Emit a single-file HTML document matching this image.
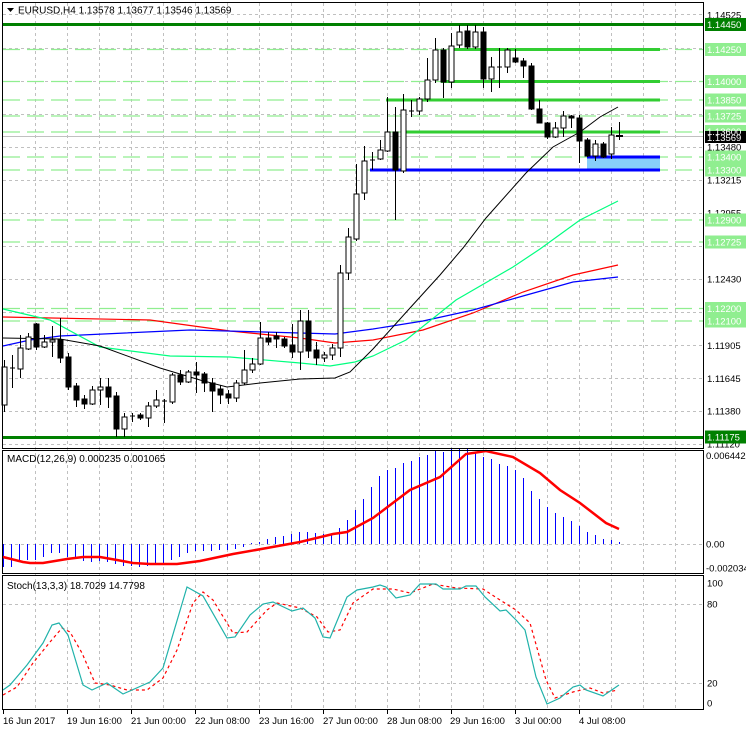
<!DOCTYPE html>
<html><head><meta charset="utf-8"><style>
html,body{margin:0;padding:0;background:#fff;width:746px;height:731px;overflow:hidden}
svg{display:block;font-family:"Liberation Sans",Tahoma,sans-serif}
</style></head><body>
<svg width="746" height="731" viewBox="0 0 746 731" xmlns="http://www.w3.org/2000/svg">
<rect width="746" height="731" fill="#fff"/>
<!-- vertical grid -->
<g stroke="#c0c0c0" stroke-dasharray="3,3" stroke-width="1">
<line x1="35.5" y1="3" x2="35.5" y2="710"/><line x1="67.5" y1="3" x2="67.5" y2="710"/><line x1="99.5" y1="3" x2="99.5" y2="710"/><line x1="131.5" y1="3" x2="131.5" y2="710"/><line x1="163.5" y1="3" x2="163.5" y2="710"/><line x1="195.5" y1="3" x2="195.5" y2="710"/><line x1="227.5" y1="3" x2="227.5" y2="710"/><line x1="259.5" y1="3" x2="259.5" y2="710"/><line x1="291.5" y1="3" x2="291.5" y2="710"/><line x1="323.5" y1="3" x2="323.5" y2="710"/><line x1="355.5" y1="3" x2="355.5" y2="710"/><line x1="387.5" y1="3" x2="387.5" y2="710"/><line x1="419.5" y1="3" x2="419.5" y2="710"/><line x1="451.5" y1="3" x2="451.5" y2="710"/><line x1="483.5" y1="3" x2="483.5" y2="710"/><line x1="515.5" y1="3" x2="515.5" y2="710"/><line x1="547.5" y1="3" x2="547.5" y2="710"/><line x1="579.5" y1="3" x2="579.5" y2="710"/><line x1="611.5" y1="3" x2="611.5" y2="710"/><line x1="643.5" y1="3" x2="643.5" y2="710"/><line x1="675.5" y1="3" x2="675.5" y2="710"/>
<!-- horizontal grid main -->
<line x1="3" y1="14.5" x2="703" y2="14.5"/><line x1="3" y1="48.5" x2="703" y2="48.5"/><line x1="3" y1="81.5" x2="703" y2="81.5"/><line x1="3" y1="114.5" x2="703" y2="114.5"/><line x1="3" y1="147.5" x2="703" y2="147.5"/><line x1="3" y1="180.5" x2="703" y2="180.5"/><line x1="3" y1="213.5" x2="703" y2="213.5"/><line x1="3" y1="246.5" x2="703" y2="246.5"/><line x1="3" y1="279.5" x2="703" y2="279.5"/><line x1="3" y1="312.5" x2="703" y2="312.5"/><line x1="3" y1="345.5" x2="703" y2="345.5"/><line x1="3" y1="378.5" x2="703" y2="378.5"/><line x1="3" y1="411.5" x2="703" y2="411.5"/><line x1="3" y1="444.5" x2="703" y2="444.5"/>
<line x1="3" y1="544.5" x2="703" y2="544.5"/>
<line x1="3" y1="604.5" x2="703" y2="604.5"/><line x1="3" y1="683.5" x2="703" y2="683.5"/>
</g>
<!-- light green dashed levels -->
<g stroke="#90ee90" stroke-width="1.2" stroke-dasharray="17,7">
<line x1="3" y1="49.5" x2="703" y2="49.5"/><line x1="3" y1="81.5" x2="703" y2="81.5"/><line x1="3" y1="100" x2="703" y2="100"/><line x1="3" y1="116" x2="703" y2="116"/><line x1="3" y1="132" x2="703" y2="132"/><line x1="3" y1="157" x2="703" y2="157"/><line x1="3" y1="170" x2="703" y2="170"/><line x1="3" y1="220" x2="703" y2="220"/><line x1="3" y1="242" x2="703" y2="242"/><line x1="3" y1="308.5" x2="703" y2="308.5"/><line x1="3" y1="321" x2="703" y2="321"/>
</g>
<!-- current price line -->
<line x1="3" y1="136.5" x2="703" y2="136.5" stroke="#c0c0c0" stroke-width="1"/>
<!-- thick dark green -->
<rect x="3" y="23" width="700" height="3" fill="#008000"/>
<rect x="3" y="436" width="700" height="3" fill="#008000"/>
<!-- lime segments -->
<rect x="450" y="48" width="210" height="3" fill="#32cd32"/>
<rect x="441" y="80" width="219" height="3" fill="#32cd32"/>
<rect x="386" y="98.5" width="274" height="3" fill="#32cd32"/>
<rect x="405" y="130.5" width="255" height="3" fill="#32cd32"/>
<!-- blue zone -->
<rect x="587" y="157" width="73" height="13" fill="#87cefa"/>
<rect x="587" y="155.5" width="73" height="3" fill="#0000ff"/>
<rect x="370" y="168.5" width="290" height="3" fill="#0000ff"/>
<!-- MAs -->
<g fill="none" stroke-width="1.2">
<polyline stroke="#ff0000" points="3,317 150,320 230,331 300,338 335,343 373,340 423,330 473,313 523,292 573,275 618,265"/>
<polyline stroke="#0000ff" points="3,346 30,340 60,336 190,330 300,333 335,334 373,329 423,321 473,310 523,296 573,282 618,277"/>
<polyline stroke="#00ff7f" points="3,309 50,320 100,347 170,356 230,357 300,363 330,366 355,362 373,356 406,340 456,300 513,267 540,249 580,220 618,201"/>
<polyline stroke="#000" stroke-width="1" points="3,338 60,339 100,346 160,368 200,380 227,387 260,383 300,379 335,378 350,372 373,349 410,308 440,275 463,248 486,218 526,173 553,147 580,132 600,117 618,107"/>
</g>
<!-- candles -->
<g stroke="#000" stroke-width="1">
<line x1="4.5" y1="360" x2="4.5" y2="412"/><rect x="2" y="367" width="5" height="38" fill="#fff"/>
<line x1="12.5" y1="355" x2="12.5" y2="388"/><line x1="10" y1="368" x2="15" y2="368"/>
<line x1="20.5" y1="335" x2="20.5" y2="378"/><rect x="18" y="348" width="5" height="21" fill="#fff"/>
<line x1="28.5" y1="333" x2="28.5" y2="350"/><rect x="26" y="337" width="5" height="12" fill="#fff"/>
<line x1="36.5" y1="323" x2="36.5" y2="350"/><rect x="34" y="324" width="5" height="23" fill="#000"/>
<line x1="44.5" y1="335" x2="44.5" y2="348"/><rect x="42" y="342" width="5" height="5" fill="#fff"/>
<line x1="52.5" y1="326" x2="52.5" y2="357"/><rect x="50" y="340" width="5" height="2" fill="#fff"/>
<line x1="60.5" y1="318" x2="60.5" y2="363"/><rect x="58" y="340" width="5" height="18" fill="#000"/>
<line x1="68.5" y1="353" x2="68.5" y2="390"/><rect x="66" y="357" width="5" height="30" fill="#000"/>
<line x1="76.5" y1="383" x2="76.5" y2="407"/><rect x="74" y="386" width="5" height="14" fill="#000"/>
<line x1="84.5" y1="395" x2="84.5" y2="409"/><rect x="82" y="399" width="5" height="5" fill="#000"/>
<line x1="92.5" y1="386" x2="92.5" y2="405"/><rect x="90" y="390" width="5" height="14" fill="#fff"/>
<line x1="100.5" y1="378" x2="100.5" y2="405"/><rect x="98" y="387" width="5" height="3" fill="#fff"/>
<line x1="108.5" y1="378" x2="108.5" y2="408"/><rect x="106" y="387" width="5" height="10" fill="#000"/>
<line x1="116.5" y1="392" x2="116.5" y2="437"/><rect x="114" y="396" width="5" height="33" fill="#000"/>
<line x1="124.5" y1="413" x2="124.5" y2="437"/><rect x="122" y="417" width="5" height="12" fill="#fff"/>
<line x1="132.5" y1="413" x2="132.5" y2="422"/><line x1="130" y1="416" x2="135" y2="416"/>
<line x1="140.5" y1="413" x2="140.5" y2="420"/><rect x="138" y="415" width="5" height="3" fill="#000"/>
<line x1="148.5" y1="402" x2="148.5" y2="427"/><rect x="146" y="406" width="5" height="12" fill="#fff"/>
<line x1="156.5" y1="390" x2="156.5" y2="408"/><rect x="154" y="400" width="5" height="6" fill="#fff"/>
<line x1="164.5" y1="399" x2="164.5" y2="423"/><line x1="162" y1="401" x2="167" y2="401"/>
<line x1="172.5" y1="373" x2="172.5" y2="404"/><rect x="170" y="375" width="5" height="27" fill="#fff"/>
<line x1="180.5" y1="370" x2="180.5" y2="385"/><rect x="178" y="375" width="5" height="7" fill="#000"/>
<line x1="188.5" y1="370" x2="188.5" y2="383"/><rect x="186" y="372" width="5" height="10" fill="#fff"/>
<line x1="196.5" y1="362" x2="196.5" y2="393"/><rect x="194" y="372" width="5" height="3" fill="#000"/>
<line x1="204.5" y1="372" x2="204.5" y2="392"/><rect x="202" y="374" width="5" height="9" fill="#000"/>
<line x1="212.5" y1="378" x2="212.5" y2="412"/><rect x="210" y="383" width="5" height="8" fill="#000"/>
<line x1="220.5" y1="385" x2="220.5" y2="404"/><rect x="218" y="389" width="5" height="6" fill="#000"/>
<line x1="228.5" y1="390" x2="228.5" y2="404"/><rect x="226" y="394" width="5" height="4" fill="#000"/>
<line x1="236.5" y1="380" x2="236.5" y2="402"/><rect x="234" y="383" width="5" height="15" fill="#fff"/>
<line x1="244.5" y1="350" x2="244.5" y2="385"/><rect x="242" y="370" width="5" height="13" fill="#fff"/>
<line x1="252.5" y1="358" x2="252.5" y2="373"/><rect x="250" y="364" width="5" height="6" fill="#fff"/>
<line x1="260.5" y1="322" x2="260.5" y2="365"/><rect x="258" y="338" width="5" height="26" fill="#fff"/>
<line x1="268.5" y1="332" x2="268.5" y2="345"/><rect x="266" y="338" width="5" height="4" fill="#000"/>
<line x1="276.5" y1="332" x2="276.5" y2="348"/><rect x="274" y="336" width="5" height="3" fill="#000"/>
<line x1="284.5" y1="337" x2="284.5" y2="348"/><rect x="282" y="339" width="5" height="7" fill="#000"/>
<line x1="292.5" y1="324" x2="292.5" y2="358"/><rect x="290" y="345" width="5" height="7" fill="#000"/>
<line x1="300.5" y1="310" x2="300.5" y2="370"/><rect x="298" y="321" width="5" height="31" fill="#fff"/>
<line x1="308.5" y1="310" x2="308.5" y2="358"/><rect x="306" y="321" width="5" height="30" fill="#000"/>
<line x1="316.5" y1="342" x2="316.5" y2="365"/><rect x="314" y="350" width="5" height="8" fill="#000"/>
<line x1="324.5" y1="352" x2="324.5" y2="362"/><rect x="322" y="355" width="5" height="3" fill="#fff"/>
<line x1="332.5" y1="344" x2="332.5" y2="360"/><rect x="330" y="348" width="5" height="7" fill="#fff"/>
<line x1="340.5" y1="265" x2="340.5" y2="357"/><rect x="338" y="273" width="5" height="75" fill="#fff"/>
<line x1="348.5" y1="228" x2="348.5" y2="280"/><rect x="346" y="237" width="5" height="36" fill="#fff"/>
<line x1="356.5" y1="164" x2="356.5" y2="241"/><rect x="354" y="194" width="5" height="45" fill="#fff"/>
<line x1="364.5" y1="146" x2="364.5" y2="200"/><rect x="362" y="161" width="5" height="32" fill="#fff"/>
<line x1="372.5" y1="152" x2="372.5" y2="170"/><line x1="370" y1="160" x2="375" y2="160"/>
<line x1="380.5" y1="140" x2="380.5" y2="160"/><rect x="378" y="150" width="5" height="9" fill="#fff"/>
<line x1="387.5" y1="97" x2="387.5" y2="152"/><rect x="385" y="132" width="5" height="19" fill="#fff"/>
<line x1="395.5" y1="107" x2="395.5" y2="220"/><rect x="393" y="132" width="5" height="38" fill="#000"/>
<line x1="403.5" y1="94" x2="403.5" y2="173"/><rect x="401" y="110" width="5" height="61" fill="#fff"/>
<line x1="411.5" y1="100" x2="411.5" y2="117"/><line x1="409" y1="111" x2="414" y2="111"/>
<line x1="419.5" y1="97" x2="419.5" y2="115"/><rect x="417" y="99" width="5" height="12" fill="#fff"/>
<line x1="427.5" y1="58" x2="427.5" y2="102"/><rect x="425" y="80" width="5" height="19" fill="#fff"/>
<line x1="435.5" y1="38" x2="435.5" y2="83"/><rect x="433" y="50" width="5" height="30" fill="#fff"/>
<line x1="443.5" y1="48" x2="443.5" y2="98"/><rect x="441" y="50" width="5" height="32" fill="#000"/>
<line x1="451.5" y1="33" x2="451.5" y2="88"/><rect x="449" y="46" width="5" height="36" fill="#fff"/>
<line x1="459.5" y1="25" x2="459.5" y2="48"/><rect x="457" y="32" width="5" height="13" fill="#fff"/>
<line x1="467.5" y1="25" x2="467.5" y2="49"/><rect x="465" y="31" width="5" height="16" fill="#000"/>
<line x1="475.5" y1="25" x2="475.5" y2="49"/><rect x="473" y="32" width="5" height="15" fill="#fff"/>
<line x1="483.5" y1="27" x2="483.5" y2="88"/><rect x="481" y="32" width="5" height="47" fill="#000"/>
<line x1="491.5" y1="57" x2="491.5" y2="92"/><rect x="489" y="67" width="5" height="12" fill="#fff"/>
<line x1="499.5" y1="48" x2="499.5" y2="88"/><line x1="497" y1="67" x2="502" y2="67"/>
<line x1="507.5" y1="48" x2="507.5" y2="73"/><rect x="505" y="50" width="5" height="17" fill="#fff"/>
<line x1="515.5" y1="49" x2="515.5" y2="63"/><rect x="513" y="58" width="5" height="4" fill="#000"/>
<line x1="523.5" y1="58" x2="523.5" y2="78"/><rect x="521" y="61" width="5" height="5" fill="#000"/>
<line x1="531.5" y1="63" x2="531.5" y2="110"/><rect x="529" y="66" width="5" height="43" fill="#000"/>
<line x1="539.5" y1="100" x2="539.5" y2="123"/><rect x="537" y="109" width="5" height="14" fill="#000"/>
<line x1="547.5" y1="122" x2="547.5" y2="139"/><rect x="545" y="123" width="5" height="14" fill="#000"/>
<line x1="555.5" y1="122" x2="555.5" y2="138"/><rect x="553" y="128" width="5" height="9" fill="#fff"/>
<line x1="563.5" y1="111" x2="563.5" y2="137"/><rect x="561" y="116" width="5" height="12" fill="#fff"/>
<line x1="571.5" y1="115" x2="571.5" y2="128"/><rect x="569" y="116" width="5" height="2" fill="#000"/>
<line x1="579.5" y1="115" x2="579.5" y2="163"/><rect x="577" y="118" width="5" height="23" fill="#000"/>
<line x1="587.5" y1="138" x2="587.5" y2="157"/><rect x="585" y="140" width="5" height="16" fill="#000"/>
<line x1="595.5" y1="140" x2="595.5" y2="161"/><rect x="593" y="144" width="5" height="12" fill="#fff"/>
<line x1="603.5" y1="142" x2="603.5" y2="158"/><rect x="601" y="144" width="5" height="13" fill="#000"/>
<line x1="611.5" y1="127" x2="611.5" y2="159"/><rect x="609" y="135" width="5" height="19" fill="#fff"/>
<line x1="619.5" y1="122" x2="619.5" y2="140"/><line x1="616" y1="136" x2="623" y2="136" stroke-width="2"/>
</g>
<!-- MACD histogram -->
<g stroke="#0000ff" stroke-width="1">
<path d="M3.5 544V567M11.5 544V567M19.5 544V562M27.5 544V560M35.5 544V560M43.5 544V557M51.5 544V553M59.5 544V553M67.5 544V557M75.5 544V558M83.5 544V561M91.5 544V562M99.5 544V561M107.5 544V562M115.5 544V564M123.5 544V566M131.5 544V566M139.5 544V567M147.5 544V566M155.5 544V565M163.5 544V563M171.5 544V560M179.5 544V557M187.5 544V553M195.5 544V551M203.5 544V551M211.5 544V551M219.5 544V550M227.5 544V550M235.5 544V549M243.5 544V547M251.5 544V543M259.5 544V542M267.5 544V539M275.5 544V537M283.5 544V536M291.5 544V534M299.5 544V532M307.5 544V532M315.5 544V533M323.5 544V534M331.5 544V534M339.5 544V528M347.5 544V520M355.5 544V510M363.5 544V499M371.5 544V487M379.5 544V476M387.5 544V470M395.5 544V468M403.5 544V463M411.5 544V461M419.5 544V457M427.5 544V455M435.5 544V451M443.5 544V452M451.5 544V449M459.5 544V448M467.5 544V449M475.5 544V453M483.5 544V457M491.5 544V459M499.5 544V464M507.5 544V466M515.5 544V470M523.5 544V478M531.5 544V491M539.5 544V499M547.5 544V507M555.5 544V513M563.5 544V517M571.5 544V521M579.5 544V526M587.5 544V532M595.5 544V535M603.5 544V539M611.5 544V540M619.5 544V542"/>
</g>
<polyline fill="none" stroke="#ff0000" stroke-width="2.5" points="3,557 23,562 30,563 43,563 67,559 83,557 100,557 117,560 133,563 150,564 177,564 200,561 233,554 267,548 300,542 333,534 347,532 360,525 373,518 410,490 440,477 466,454 486,451 513,457 540,473 560,490 580,503 606,523 619,529"/>
<!-- Stoch -->
<polyline fill="none" stroke="#ff0000" stroke-width="1.2" stroke-dasharray="3,3" points="3,695 17,687 33,663 50,642 62,628 70,632 82,653 95,683 110,685 127,690 147,690 163,678 177,650 193,603 203,592 213,600 233,633 247,632 267,610 277,603 300,608 317,617 328,632 340,630 353,603 373,589 393,589 410,593 433,584 456,588 483,589 500,600 516,610 530,623 546,680 555,698 573,692 590,688 603,693 618,690"/>
<polyline fill="none" stroke="#20b2aa" stroke-width="1.2" points="3,690 10,685 27,665 43,643 52,625 59,623 68,635 83,685 92,690 107,683 123,694 150,682 163,668 187,587 203,596 227,638 235,637 250,615 263,604 273,602 292,611 303,608 315,618 323,637 330,638 347,597 357,590 373,587 380,585 386,587 396,598 410,595 420,584 436,584 443,589 460,589 466,586 476,586 485,597 500,611 506,610 516,620 525,630 536,677 547,704 560,698 573,687 580,685 586,690 603,696 619,685"/>
<!-- frames -->
<g fill="none" stroke="#000" stroke-width="1">
<rect x="2.5" y="2.5" width="701" height="446"/>
<rect x="2.5" y="450.5" width="701" height="123"/>
<rect x="2.5" y="575.5" width="701" height="134"/>
</g>
<!-- time ticks -->
<g stroke="#000"><path d="M3.5 710v4M67.5 710v4M131.5 710v4M195.5 710v4M259.5 710v4M323.5 710v4M387.5 710v4M451.5 710v4M515.5 710v4M579.5 710v4M703.5 15v0"/></g>
<!-- title -->
<path d="M7 8h7l-3.5 4z" fill="#000"/>
<text x="18" y="13.5" font-size="10" fill="#000">EURUSD,H4  1.13578 1.13677 1.13546 1.13569</text>
<text x="7" y="462" font-size="10" fill="#000">MACD(12,26,9) 0.000235 0.001065</text>
<text x="7" y="589" font-size="10" fill="#000">Stoch(13,3,3) 18.7029 14.7798</text>
<!-- right axis -->
<g font-size="9.5" fill="#000">
<text x="707" y="18.5">1.14525</text>
<text x="707" y="150.5">1.13480</text>
<text x="707" y="183.5">1.13215</text>
<text x="707" y="216.5">1.12955</text>
<text x="707" y="282.5">1.12430</text>
<text x="707" y="349">1.11905</text>
<text x="707" y="382">1.11645</text>
<text x="707" y="414.5">1.11380</text>
<text x="707" y="447.5">1.11120</text>
<text x="706" y="459">0.006442</text>
<text x="706" y="547.5">0.00</text>
<text x="706" y="571.5">-0.002034</text>
<text x="707" y="586.5">100</text>
<text x="707" y="607.5">80</text>
<text x="707" y="686.5">20</text>
<text x="707" y="706.5">0</text>
</g>
<g fill="#90ee90">
<rect x="705" y="43" width="41" height="13"/><rect x="705" y="75" width="41" height="13"/><rect x="705" y="93.5" width="41" height="13"/><rect x="705" y="109.5" width="41" height="13"/><rect x="705" y="125" width="41" height="13"/><rect x="705" y="150.5" width="41" height="13"/><rect x="705" y="163.5" width="41" height="13"/><rect x="705" y="213.5" width="41" height="13"/><rect x="705" y="235.5" width="41" height="13"/><rect x="705" y="302" width="41" height="13"/><rect x="705" y="314.5" width="41" height="13"/>
</g>
<rect x="705" y="131" width="41" height="12" fill="#000"/>
<rect x="705" y="18" width="41" height="13" fill="#008000"/>
<rect x="705" y="430.5" width="41" height="13" fill="#008000"/>
<g font-size="9.5" fill="#fff">
<text x="707" y="28">1.14450</text><text x="707" y="53">1.14250</text><text x="707" y="85">1.14000</text><text x="707" y="103.5">1.13850</text><text x="707" y="119.5">1.13725</text><text x="707" y="135">1.13600</text><text x="707" y="141">1.13569</text><text x="707" y="160.5">1.13400</text><text x="707" y="173.5">1.13300</text><text x="707" y="223.5">1.12900</text><text x="707" y="245.5">1.12725</text><text x="707" y="312">1.12200</text><text x="707" y="324.5">1.12100</text><text x="707" y="440.5">1.11175</text>
</g>
<!-- time labels -->
<g font-size="9.5" fill="#000">
<text x="3" y="724">16 Jun 2017</text><text x="67" y="724">19 Jun 16:00</text><text x="131" y="724">21 Jun 00:00</text><text x="195" y="724">22 Jun 08:00</text><text x="259" y="724">23 Jun 16:00</text><text x="323" y="724">27 Jun 00:00</text><text x="387" y="724">28 Jun 08:00</text><text x="450" y="724">29 Jun 16:00</text><text x="515" y="724">3 Jul 00:00</text><text x="579" y="724">4 Jul 08:00</text>
</g>
</svg>
</body></html>
